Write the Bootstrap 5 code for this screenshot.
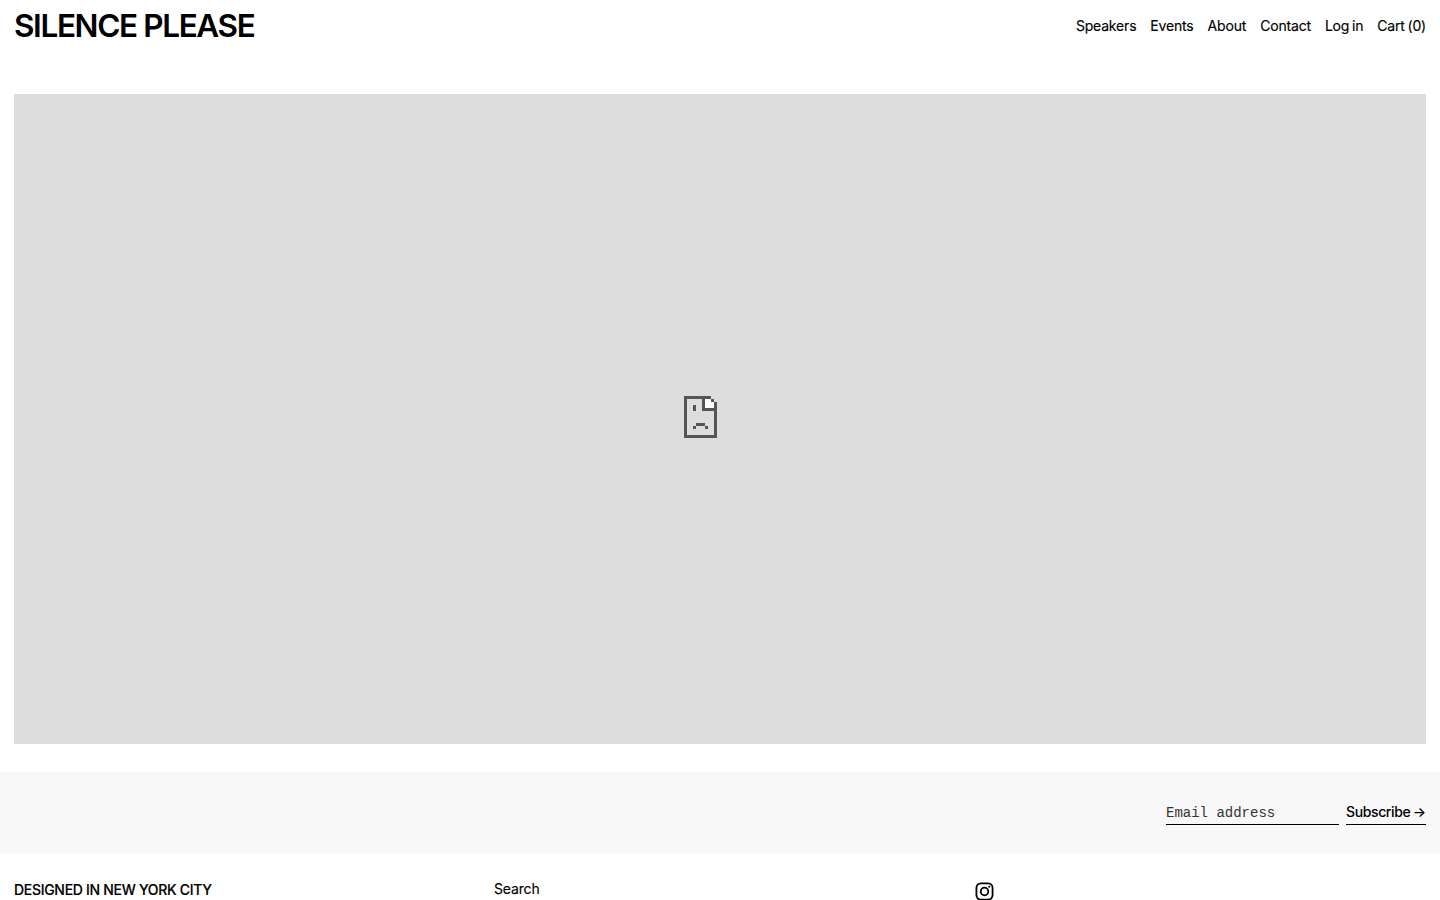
<!DOCTYPE html>
<html lang="en">
<head>
    <meta charset="UTF-8">
    <meta name="viewport" content="width=device-width, initial-scale=1">
    <title>Silence Please</title>
    <link href="https://cdn.jsdelivr.net/npm/bootstrap@5.3.0/dist/css/bootstrap.min.css" rel="stylesheet">
    <script src="https://cdn.jsdelivr.net/npm/bootstrap@5.3.0/dist/js/bootstrap.bundle.min.js" defer></script>
    <style>
        html, body { height: 900px; overflow: hidden; }
        body { font-family: Inter, "Liberation Sans", sans-serif; color: #000; background: #fff; font-size: 14px; }
        a { color: #000; text-decoration: none; }
        .site-head { height: 94px; padding: 0 14px; }
        .site-logo { font-size: 31.5px; line-height: 1; font-weight: 600; letter-spacing: -1.37px; margin-top: 10px; white-space: nowrap; }
        .site-nav { gap: 14px; margin-top: 17px; font-size: 14px; line-height: 18px; letter-spacing: -0.18px; word-spacing: -1px; -webkit-text-stroke: 0.15px #000; }
        .hero-wrap { padding: 0 14px; }
        .hero-box { height: 650px; background: #ddd; padding: 0 40px 4px 0; }
        .news-band { height: 81px; margin-top: 28px; background: #f8f8f8; padding: 0 14px 28px; gap: 7px; }
        .news-input { width: 173px; height: 25px; border: 0; border-bottom: 1px solid #000; border-radius: 0; background: transparent; padding: 2px 0 0; font-family: "Liberation Mono", monospace; font-size: 14px; color: #000; outline: 0; }
        .news-input::placeholder { color: #333; opacity: 1; }
        .news-btn { width: 80px; height: 25px; border: 0; border-bottom: 1px solid #000; border-radius: 0; background: transparent; padding: 0; font-size: 14px; font-weight: 500; line-height: 24px; letter-spacing: -0.38px; word-spacing: -1px; color: #000; text-align: left; white-space: nowrap; }
        .foot-col { width: 480px; padding: 27px 14px 0; line-height: 20px; }
        .foot-title { font-weight: 500; letter-spacing: -0.3px; -webkit-text-stroke: 0.15px #000; }
        .foot-link { margin-top: -1px; display: block; letter-spacing: -0.15px; -webkit-text-stroke: 0.15px #000; }
        .foot-icon { display: block; margin-left: 1px; }
    </style>
</head>
<body>
    <header class="site-head d-flex justify-content-between align-items-start">
        <a class="site-logo" href="#">SILENCE PLEASE</a>
        <nav class="site-nav d-flex">
            <a href="#">Speakers</a>
            <a href="#">Events</a>
            <a href="#">About</a>
            <a href="#">Contact</a>
            <a href="#">Log in</a>
            <a href="#">Cart (0)</a>
        </nav>
    </header>

    <main class="hero-wrap">
        <div class="hero-box d-flex align-items-center justify-content-center">
            <svg width="33" height="42" viewBox="0 0 11 14" shape-rendering="crispEdges" role="img" aria-label="Broken image">
                <path fill="#fff" d="M7 1h2v1h1v2H7z"/>
                <path fill="#555" d="M0 0h9v1h1v1h1v12H0zM1 1v12h9V5H6V1zM7 1v3h3V2H9V1zM3 3h1v2H3zM4 9h3v1H4zM3 10h1v1H3zM7 10h1v1H7z" fill-rule="evenodd"/>
            </svg>
        </div>
    </main>

    <form class="news-band d-flex justify-content-end align-items-end">
        <input class="news-input" type="email" placeholder="Email address">
        <button class="news-btn" type="button">Subscribe →</button>
    </form>

    <footer class="d-flex">
        <div class="foot-col foot-title">DESIGNED IN NEW YORK CITY</div>
        <div class="foot-col"><a class="foot-link" href="#">Search</a></div>
        <div class="foot-col">
            <a class="foot-icon" href="#" aria-label="Instagram">
                <svg width="19" height="19" viewBox="0 0 20 20" fill="none" stroke="#000" stroke-width="1.9">
                    <rect x="1.5" y="1.5" width="17" height="17" rx="4.8"/>
                    <circle cx="10" cy="10" r="4"/>
                    <circle cx="15" cy="5" r="1.1" fill="#000" stroke="none"/>
                </svg>
            </a>
        </div>
    </footer>
</body>
</html>
